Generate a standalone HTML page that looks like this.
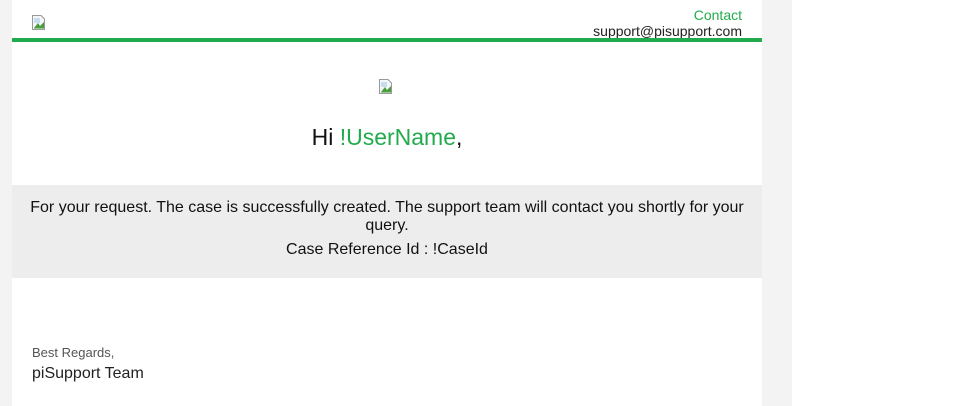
<!DOCTYPE html>
<html><head><style>
body{margin:0;width:960px;height:406px;background:linear-gradient(to right,#f3f3f3 0,#f3f3f3 792px,#fff 792px);font-family:"Liberation Sans",Arial,sans-serif;overflow:hidden}
.col{position:absolute;left:12px;top:0;width:750px;height:406px;background:#fff}
.t{position:absolute;white-space:nowrap}
.img{position:absolute;width:14px;height:15px}
</style></head><body>
<div class="col">
<svg class="img" style="left:20px;top:15px" viewBox="0 0 14 15"><path d="M0.5 0.5H9L12.5 4V14.5H0.5Z" fill="#f4f6f8" stroke="#999"/><path d="M2 13L6 8l2 3 4-4v6.5H2z" fill="#4a9e3c"/><rect x="2" y="3" width="6" height="5" fill="#c8dcf0"/></svg>
<div class="t" style="right:20px;top:7px;font-size:14px;color:#22ab4e">Contact</div>
<div class="t" style="right:20px;top:23px;font-size:14px;color:#222">support@pisupport.com</div>
<div style="position:absolute;left:0;top:38px;width:750px;height:4px;background:#22ab4e"></div>
<svg class="img" style="left:367px;top:79px" viewBox="0 0 14 15"><path d="M0.5 0.5H9L12.5 4V14.5H0.5Z" fill="#f4f6f8" stroke="#999"/><path d="M2 13L6 8l2 3 4-4v6.5H2z" fill="#4a9e3c"/><rect x="2" y="3" width="6" height="5" fill="#c8dcf0"/></svg>
<div class="t" style="left:0;width:750px;text-align:center;top:124px;font-size:23px;color:#111">Hi <span style="color:#22ab4e">!UserName</span>,</div>
<div style="position:absolute;left:0;top:185px;width:750px;height:93px;background:#ededed"></div>
<div style="position:absolute;left:10px;width:730px;top:199px;font-size:16px;line-height:18px;text-align:center;color:#111">For your request. The case is successfully created. The support team will contact you shortly for your query.</div>
<div class="t" style="left:0;width:750px;text-align:center;top:241px;font-size:16px;color:#111">Case Reference Id : !CaseId</div>
<div class="t" style="left:20px;top:345px;font-size:13px;color:#555">Best Regards,</div>
<div class="t" style="left:20px;top:365px;font-size:16px;color:#222">piSupport Team</div>
</div>
</body></html>
